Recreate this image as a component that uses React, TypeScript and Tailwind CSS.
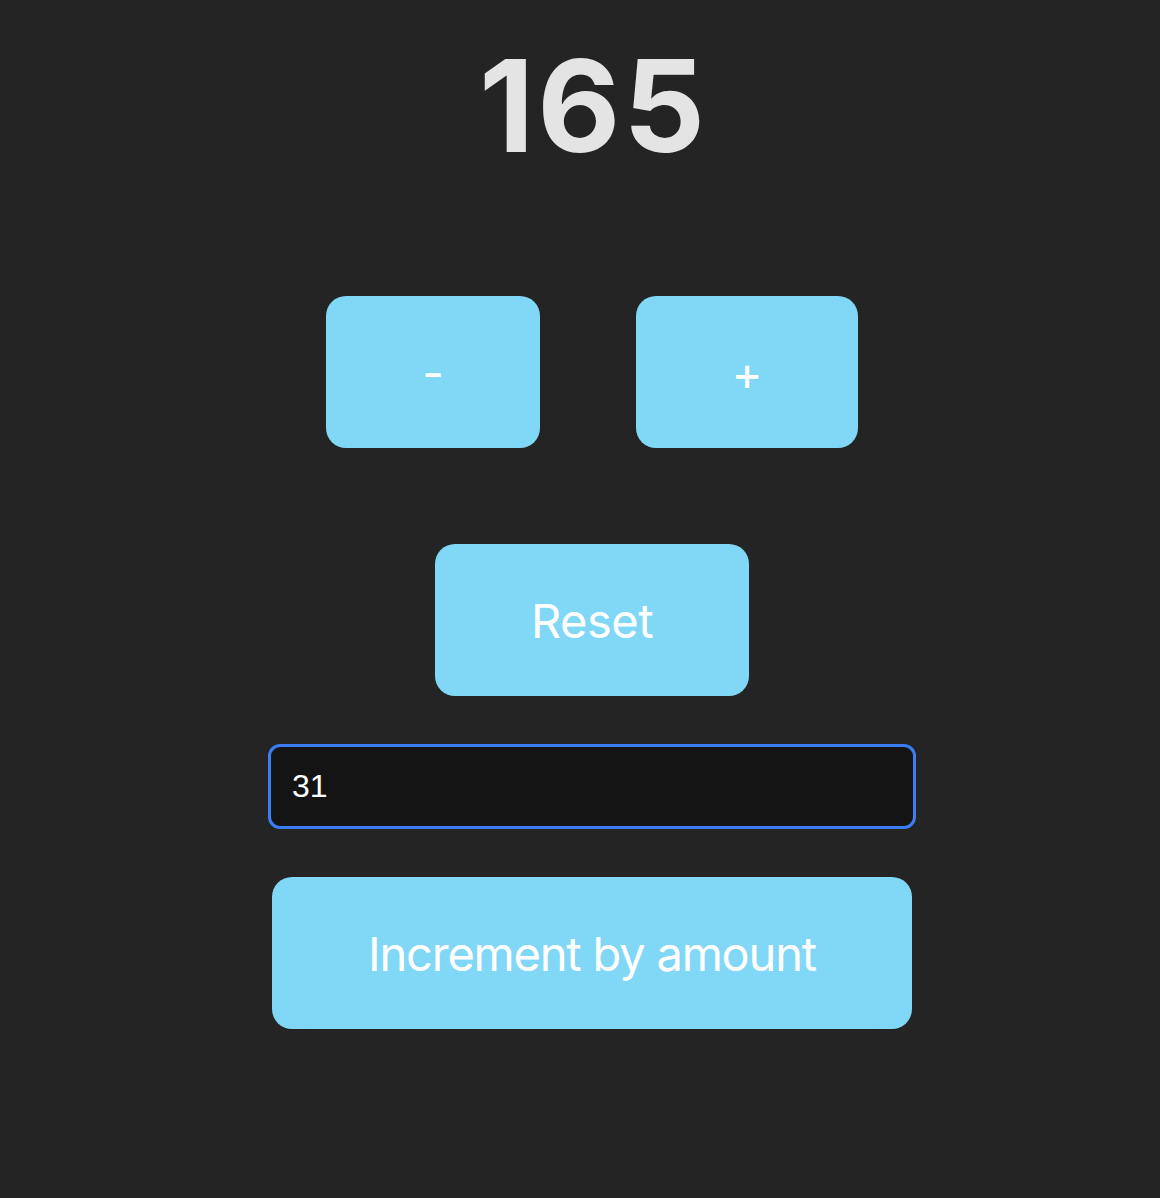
import React from "react";

export default function App() {
  const btn =
    "flex items-center justify-center rounded-[20px] bg-[#81d7f6] text-white text-[47px] leading-none h-[152px]";
  return (
    <div
      className="min-h-[1198px] w-full bg-[#242424]"
      style={{ fontFamily: "Inter, 'Noto Sans', sans-serif" }}
    >
      <div className="ml-[24px] w-[1136px] flex flex-col items-center pt-[42px]">
        <div className="text-[128px] font-bold leading-none text-[#e4e4e4] tracking-[3px] pl-[3px]">165</div>
        <div className="mt-[126px] flex gap-[96px]">
          <button className={`${btn} w-[214px]`}>-</button>
          <button className={`${btn} w-[222px]`}>+</button>
        </div>
        <button className={`${btn} tracking-[-0.5px] w-[314px] mt-[96px]`}>Reset</button>
        <input
          readOnly
          value="31"
          className="mt-[48px] w-[648px] h-[85px] rounded-[12px] border-[3px] border-[#3b7ef3] bg-[#141414] pl-[21px] text-[32px] text-white outline-none"
          style={{ fontFamily: "'Liberation Sans', Arial, sans-serif" }}
        />
        <button className={`${btn} tracking-[-1.2px] w-[640px] mt-[48px]`}>Increment by amount</button>
      </div>
    </div>
  );
}
